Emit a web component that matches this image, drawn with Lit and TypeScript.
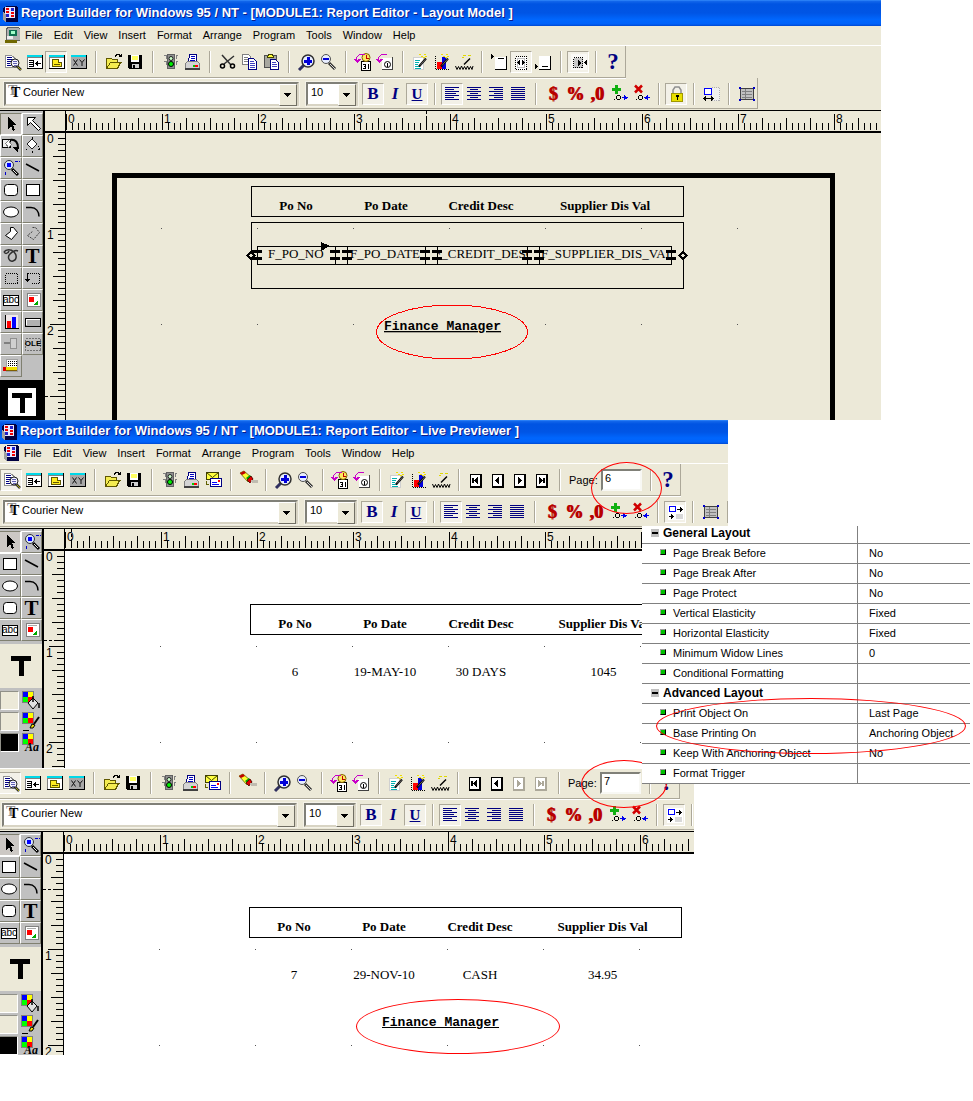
import { LitElement, html, svg, css, nothing } from "lit";
import { customElement, property } from "lit/decorators.js";

const N = "#000080";
const alignLines = (xs: number[][]) => svg`${xs.map(([x, w], i) => svg`<rect x=${x} y=${3 + i * 2} width=${w} height="1" fill=${N}/>`)}`;
const win = svg`<rect x="3" y="3" width="16" height="14" fill="#000"/><rect x="3" y="3" width="15" height="13" fill="#808080"/><rect x="4" y="6" width="14" height="10" fill="#fff"/><rect x="3" y="3" width="15" height="2" fill="#00d8e8"/>`;
const wand = svg`<g shape-rendering="auto"><path d="M9 14.500 16 6.500" stroke="#000" stroke-width="2"/><path d="M10 13.500 16 6.500" stroke="#ccc" stroke-width=".5"/></g><path d="M9 2h2m3 0h2M11 4h2m2 0h2M13 5h2" stroke="#f0e000" fill="none"/>`;
const clockArrow = svg`<path d="M4 9V5l3-2h5v-1H6L3 5v2H0l4 4 4-4H5" fill="#c800c8"/>`;
const nav = (inner: unknown) => svg`<rect x="4" y="4" width="12" height="14" fill="currentColor"/><rect x="5" y="5" width="9" height="11" fill="#fff"/>${inner}`;
const quad = svg`<rect x="1" y="0" width="12" height="12" fill="#808080"/><rect x="2" y="1" width="5" height="5" fill="#00f"/><rect x="7" y="1" width="5" height="5" fill="#ff0"/><rect x="2" y="6" width="5" height="5" fill="#0f0"/><rect x="7" y="6" width="5" height="5" fill="#f00"/>`;
const photo = svg`<rect x="4" y="3" width="13" height="13" fill="#fff" stroke="#808080"/><path d="M6 5.500h9" stroke="#aaa"/><rect x="6" y="7" width="5" height="5" fill="#f00"/><path d="M10 15l5-5v5z" fill="#0a0"/>`;
const magnifier = svg`<g shape-rendering="auto"><path d="M11 11l6 6" stroke="#000" stroke-width="3"/><path d="M12 12l4 4" stroke="#e8e8e8" stroke-width="1"/></g><circle cx="8" cy="7" r="4.500" fill="#d8e4ff" stroke="#303030"/><rect x="6" y="5" width="4" height="4" fill="#00f"/><path d="M14 3.500h5M4.500 14v4" stroke="#00c" stroke-dasharray="3 1"/>`;
const zero = svg`<rect x="5" y="15" width="1" height="1"/><path d="M8 11h3v1H8zM8 15h3v1H8zM7 12h1v3H7zM11 12h1v3h-1z" fill="#000"/>`;

const ICONS: Record<string, unknown> = {
  preview: svg`<path d="M3.500 3.500h6l5 4v8h-11z" fill="#fff" stroke="#909090"/><path d="M5 5.500h5M5 7.500h7M5 9.500h4M5 11.500h3M5 13.500h4" stroke=${N}/><g shape-rendering="auto"><path d="M15 14l4 4" stroke="#303030" stroke-width="2.500"/><path d="M15 14l4 4" stroke="#cc0" stroke-width=".8"/><circle cx="13" cy="11" r="4" fill="#f4f4ff" stroke="#202020"/></g><path d="M11 9.500h4M11 11.500h4M12 13.500h3" stroke="#6060b0"/>`,
  model: svg`${win}<path d="M5 8.500h4M5 10.500h4M5 12.500h4M5 14.500h4M9.500 8v7" stroke="#000"/><path d="M11 11.500h6" stroke="#000"/><path d="M11 11.500l3-3v6z" fill="#000"/>`,
  layout: svg`${win}<path d="M6.500 7.500h6l3 3v4h-9z" fill="#ffec20" stroke="#605800"/><path d="M12.500 7.500v3h3" fill="#fff" stroke="#605800"/><path d="M8 12.500h6" stroke="#605800"/>`,
  param: svg`<rect x="3" y="3" width="16" height="14" fill="#000"/><rect x="3" y="3" width="15" height="13" fill="#a8a8a8"/><rect x="3" y="3" width="15" height="2" fill="#00d8e8"/><path shape-rendering="auto" d="M5.500 7.500l4 6M9.500 7.500l-4 6M11.500 7.500l2.500 3 2.500-3M14 10.500v3.500" stroke="#101010" fill="none"/>`,
  open: svg`<path d="M3.500 6.500h5l1 1h5v3h3l-3 6h-11z" fill="#f4ec50" stroke="#605800"/><path d="M3.500 16.500l4-6h11" fill="none" stroke="#605800"/><path d="M12 4.500l2-2h2l2 2m.500-3v3h-3" stroke="#000" fill="none"/>`,
  save: svg`<path d="M3 3h14v14H4l-1-1z" fill="#000"/><rect x="6" y="3" width="8" height="7" fill="#fff"/><path d="M7 4h6v4H7z" fill="#ffff60"/><rect x="7" y="12" width="7" height="4" fill="#d0d0d0"/><rect x="8" y="13" width="2" height="3" fill="#000"/>`,
  light: svg`<rect x="7.500" y="2.500" width="7" height="14" fill="#909090" stroke="#606060"/><path d="M4 3.500h2v3M4 9.500h2v3M18 3.500h-2v3M18 9.500h-2v3" stroke="#808080" fill="none"/><circle cx="11" cy="6.500" r="2" fill="#c8ffc8" stroke="#202020"/><circle cx="11" cy="12" r="2.500" fill="#00f000" stroke="#000"/>`,
  print: svg`<path d="M7.500 2.500h7v7h-8z" fill="#fff" stroke="#000080"/><path d="M9 4.500h4M9 6.500h4M8 8.500h5" stroke="#0000c0"/><path d="M3.500 11.500l2-2h10l2 2v5h-14z" fill="#d4d4d4" stroke="#808080"/><rect x="3" y="16" width="15" height="2" fill="#404040"/><rect x="11" y="13" width="2" height="2" fill="#0c0"/><rect x="13" y="13" width="3" height="2" fill="#f00"/>`,
  mail: svg`<rect x="3.500" y="2.500" width="12" height="7" fill="#ffff40" stroke="#404000"/><path shape-rendering="auto" d="M3.500 2.500l6 5 6-5" fill="none" stroke="#404000"/><rect x="7.500" y="8.500" width="11" height="8" fill="#fff" stroke="#000080"/><path d="M9 12.500h5M9 14.500h7" stroke="#00f"/><rect x="15" y="10" width="2" height="2" fill="#f00"/><path d="M3.500 11v3h2" stroke="#606000" fill="none"/>`,
  cut: svg`<g shape-rendering="auto"><path d="M5 3l9 10M17 4L7 12" stroke="#303030" stroke-width="1.500"/><circle cx="5.500" cy="14" r="2" fill="none" stroke="#000" stroke-width="1.500"/><circle cx="15.500" cy="14" r="2" fill="none" stroke="#000" stroke-width="1.500"/></g>`,
  copy: svg`<path d="M3.500 2.500h6l2 2v8h-8z" fill="#fff" stroke="#808080"/><path d="M5 5.500h4M5 7.500h4M5 9.500h4" stroke="#808080"/><path d="M9.500 6.500h5l3 3v8h-8z" fill="#fff" stroke=${N}/><path d="M11 9.500h4M11 11.500h5M11 13.500h5M11 15.500h5" stroke="#4040c0"/>`,
  paste: svg`<rect x="3.500" y="3.500" width="12" height="12" fill="#a8a8a0" stroke="#505050"/><path d="M6.500 5.500l1-3h4l1 3z" fill="#ffff40" stroke="#404000"/><path d="M9.500 7.500h5l3 3v7h-8z" fill="#fff" stroke=${N}/><path d="M11 10.500h4M11 12.500h5M11 14.500h5" stroke="#4040c0"/>`,
  zoomin: svg`<path shape-rendering="auto" d="M8 13l-5 5" stroke="#303060" stroke-width="3"/><circle cx="12" cy="9" r="6" fill="#e8eeff" stroke="#303030" stroke-width="1.500"/><path d="M8 9.500h8M12 5v8" stroke="#0000d8" stroke-width="3"/>`,
  zoomout: svg`<g shape-rendering="auto"><path d="M11 11l6 6" stroke="#303030" stroke-width="3"/><path d="M12 12l5 5" stroke="#d8d8d8"/></g><circle cx="8" cy="7" r="4.500" fill="#e8eeff" stroke="#505050"/><path d="M5 7h6" stroke="#0000d8" stroke-width="2"/>`,
  calendar: svg`<rect x="8.500" y="9.500" width="9" height="9" fill="#fff" stroke="#000"/><path d="M10 12.500h3M11 14.500h2M10 16.500h3M12.500 12v5M15.500 12v5" stroke="#000" fill="none"/><circle cx="13" cy="5.500" r="4" fill="#ffe860" stroke="#806000"/><path d="M13.500 3v3h2" stroke="#c00000" fill="none"/>${clockArrow}`,
  page1: svg`<path d="M7 6h10v11H7z" fill="#fff"/><path d="M17.500 5v12.500H7" stroke="#404040" fill="none"/><circle cx="12.500" cy="12.500" r="3" fill="#fff" stroke="#000"/><path d="M12.500 11v4" stroke="#000"/>${clockArrow}`,
  wiz: svg`<rect x="3.500" y="5.500" width="10" height="12" fill="#fff" stroke="#d0d0d0"/><path d="M5 8.500h5M5 10.500h4M5 12.500h3M5 14.500h5M5 16.500h6" stroke="#00b0b0"/>${wand}`,
  chartwiz: svg`<path d="M3.500 4v13.500h14" stroke="#000" stroke-dasharray="1 1" fill="none"/><rect x="5" y="10" width="5" height="7" fill="#f00"/><rect x="10" y="5" width="4" height="12" fill="#0000e0"/>${wand}`,
  webwiz: svg`<path shape-rendering="auto" d="M10 12.500l6-6" stroke="#000" stroke-width="1.500"/><path d="M9 3.500h3m2 0h3M8 5.500h2" stroke="#e0d800"/><path shape-rendering="auto" d="M1.500 14l1.500 3.500 1.500-3 1.500 3L7.500 14l1.500 3.500 1.500-3 1.500 3 1.500-3.500 1.500 3.500 1.500-3 1.500 3 1-3.500" stroke="#000" fill="none"/>`,
  pghead: svg`<path d="M2 2l3 2.500L2 7z" fill="#000"/><rect x="6" y="5" width="11" height="12" fill="#fff"/><path d="M17.500 4v13.500H6M9 6.500h6" stroke="#000" fill="none"/>`,
  pgbody: svg`<rect x="4.500" y="4.500" width="11" height="13" fill="#fff" stroke="#000" stroke-dasharray="1 1"/><rect x="6.500" y="6.500" width="7" height="9" fill="#fff" stroke="#c0c0c0"/><path d="M9 8v5l-3-2.500zM11 8v5l3-2.500z" fill="#000"/>`,
  pgfoot: svg`<path d="M2 12l3 2.500L2 17z" fill="#000"/><rect x="6" y="4" width="11" height="13" fill="#fff"/><path d="M17.500 4v13.500H6M9 14.500h6" stroke="#000" fill="none"/>`,
  anchor: svg`<rect x="3" y="2" width="16" height="16" fill="#fff" opacity=".6"/><rect x="5.500" y="5.500" width="9" height="10" fill="#c8c8c8" stroke="#000" stroke-dasharray="1 1"/><path d="M10 8l4 3-4 3zM19 8v5l-3-2.500z" fill="#000"/>`,
  lock: svg`<path shape-rendering="auto" d="M7 9V6l2-3h4l2 3v3" fill="none" stroke="#909090" stroke-width="1.500"/><rect x="5.500" y="9.500" width="11" height="8" fill="#e8e000" stroke="#a09800"/><path d="M10 11h3v2h-1v3h-1v-3h-1z" fill="#000"/>`,
  flex: svg`<rect x="10.500" y="3.500" width="8" height="13" fill="#f0f0f0" stroke="#b0b0b0" stroke-dasharray="1 1"/><rect x="3.500" y="4.500" width="7" height="6" fill="#fff" stroke="#00f"/><path d="M4 14.500h8" stroke="#000"/><path d="M2 14.500l3-3v6zM13 14.500l-3-3v6z" fill="#000"/>`,
  flow: svg`<rect x="3" y="3" width="16" height="15" fill="#fff"/><rect x="4.500" y="4.500" width="6" height="5" fill="#fff" stroke="#00f"/><path d="M12 7.500h4M4 14.500h4" stroke="#000"/><path d="M15 5l3 2.500-3 2.500zM6 12l3 2.500L6 17z" fill="#000"/><rect x="11" y="12" width="7" height="5" fill="#d8d8d8"/>`,
  region: svg`<rect x="4.500" y="4.500" width="13" height="11" fill="#c0c0c0" stroke="#404040"/><path d="M6 7.500h10M6 10.500h10M6 13.500h10M9.500 5v10" stroke="#808080"/><path d="M3 3h2v2H3zM17 3h2v2h-2zM3 15h2v2H3zM17 15h2v2h-2z" fill="#00c"/>`,
  left: alignLines([[3, 14], [3, 9], [3, 14], [3, 11], [3, 14], [3, 9], [3, 14]]),
  center: alignLines([[3, 14], [6, 8], [3, 14], [6, 8], [3, 14], [6, 8], [3, 14]]),
  right: alignLines([[3, 14], [8, 9], [3, 14], [8, 9], [3, 14], [8, 9], [3, 14]]),
  justify: alignLines([[3, 14], [3, 14], [3, 14], [3, 14], [3, 14], [3, 14], [3, 14]]),
  erase: svg`<g shape-rendering="auto"><path d="M2 3l4-2 8 7-4 4z" fill="#ffff30" stroke="#606000" stroke-width=".8"/><path d="M2 3l4-2 2 2-4 2z" fill="#c00000"/><path d="M8 8l4-3 3 4-3 3z" fill="#00a000"/><path d="M9 10l4-4 2 3-3 4z" fill="#e00000" stroke="#400" stroke-width=".8"/></g><path d="M13 10h7v3h-6z" fill="#c0bcb0"/>`,
  first: nav(svg`<path d="M6 8h2v5H6z" fill="currentColor"/><path d="M12 7v7l-4-3.500z" fill="currentColor"/>`),
  prev: nav(svg`<path d="M11 7v7l-4-3.500z" fill="currentColor"/>`),
  next: nav(svg`<path d="M8 7v7l4-3.500z" fill="currentColor"/>`),
  last: nav(svg`<path d="M7 7v7l4-3.500z" fill="currentColor"/><path d="M11 8h2v5h-2z" fill="currentColor"/>`),
  plusdec: svg`<path d="M3 4h3V1h3v3h3v3H9v3H6V7H3z" fill="#10b010"/>${zero}<path d="M13 13h2v-2l4 2.500-4 3V14h-2z" fill="#00e"/>`,
  lessdec: svg`<path shape-rendering="auto" d="M4 1.500l7 7M11 1.500l-7 7" stroke="#d00000" stroke-width="2.500"/>${zero}<path d="M19 13h-2v-2l-4 2.500 4 3V14h2z" fill="#00e"/>`,
  select: svg`<path d="M7 3v12l3-3 2 5 2-1-2-5h4z" fill="#000"/>`,
  selectframe: svg`<path shape-rendering="auto" d="M4.500 3.500h8l-3 3 8 8-2 2-8-8-3 3z" fill="#fff" stroke="#000"/>`,
  rotate: svg`<rect x="1.500" y="3.500" width="8" height="8" fill="#f0f0f0" stroke="#000"/><path d="M4.500 7.500l3-3 3 4-3 3z" fill="#fff" stroke="#808080"/><path shape-rendering="auto" d="M9 4c6-1 8 3 8 8" fill="none" stroke="#000" stroke-width="2"/><path d="M11 11h7l-1 5z" fill="#000"/>`,
  reshape: svg`<path shape-rendering="auto" d="M9 3l5 5-5 5-5-5z" fill="#fff" stroke="#202020"/><path d="M9.500 1v2M15 10l2 2-2 3M9.500 15v2M3.500 13v1" stroke="#000" fill="none" stroke-dasharray="2 1"/>`,
  magnify: magnifier,
  line: svg`<path shape-rendering="auto" d="M3 6l13 7" stroke="#000" stroke-width="1.500"/>`,
  rrect: svg`<rect x="3.500" y="4.500" width="13" height="11" rx="3" fill="#fff" stroke="#000" shape-rendering="auto"/>`,
  rect: svg`<rect x="3.500" y="4.500" width="13" height="11" fill="#fff" stroke="#000"/>`,
  oval: svg`<ellipse cx="10" cy="10" rx="7.500" ry="5" fill="#fff" stroke="#000"/>`,
  arc: svg`<path shape-rendering="auto" d="M3 5.500h5c5 0 8 4 8 9" fill="none" stroke="#000" stroke-width="1.500"/>`,
  polygon: svg`<path shape-rendering="auto" d="M9.500 3.500h3l4 5-6 7-6-4 5-4z" fill="#fff" stroke="#000"/>`,
  polyline: svg`<path shape-rendering="auto" d="M9.500 3.500h3l4 5-6 7-6-4 5-4" fill="none" stroke="#404040" stroke-dasharray="2 1"/>`,
  freehand: svg`<path shape-rendering="auto" d="M3 6c2-3 7-3 10 0s3 8-1 9-6-4-3-7 6-4 8-3M3 6c1 2 4 2 5-1" fill="none" stroke="#303030" stroke-width="1.500"/>`,
  frame: svg`<rect x="4.500" y="5.500" width="12" height="10" fill="none" stroke="#000" stroke-dasharray="1 1"/>`,
  repeat: svg`<path d="M5 5.500h11.500v10H9" fill="none" stroke="#000" stroke-dasharray="1 1"/><path d="M4.500 5v9M2 11.500h5M3 12.500h3" fill="none" stroke="#000"/>`,
  field: svg`<rect x="2.500" y="5.500" width="15" height="10" fill="#fff" stroke="#000"/>`,
  link: photo,
  chart: svg`<rect x="4" y="3" width="13" height="13" fill="#f0e8e8"/><path d="M4.500 3v13.500h13" stroke="#000" fill="none"/><rect x="6" y="9" width="4" height="7" fill="#f00"/><rect x="11" y="5" width="4" height="11" fill="#00f"/>`,
  button: svg`<rect x="2.500" y="6.500" width="15" height="8" rx="1" fill="#b0b0b0" stroke="#000"/><path d="M3.500 13V7.500h13" stroke="#fff" fill="none"/>`,
  anchortool: svg`<path d="M3 9h6" stroke="#808080" stroke-width="2"/><path d="M9.500 4.500h6v10h-6z" fill="#d0d0d0" stroke="#909090"/>`,
  ole: svg`<rect x="2.500" y="4.500" width="15" height="12" fill="none" stroke="#707070" stroke-dasharray="2 1"/>`,
  extra: svg`<rect x="5.500" y="3.500" width="11" height="12" fill="#fff" stroke="#a0a0a0"/><path d="M7 5.500h9M7 7.500h9M7 9.500h9" stroke="#000" stroke-dasharray="1 1"/><rect x="4" y="11" width="12" height="3" fill="#f0e000"/><path d="M4 14h12v1H4z" fill="#806000"/><path d="M2 11h3v4H2z" fill="#e00000"/>`,
  fill: svg`${quad}<g shape-rendering="auto"><path d="M7 12l5-5 5 5-5 6z" fill="#e0e0e0" stroke="#000"/><path d="M12 5v6M18 12v5" stroke="#000" stroke-width="1.500"/></g>`,
  linecolor: svg`${quad}<g shape-rendering="auto"><path d="M18 5l-5 7" stroke="#000" stroke-width="2"/><path d="M9 16l2-4 3 1-2 3z" fill="#f0e000" stroke="#000"/></g><path d="M2 18.500h6" stroke="#000"/>`,
  textcolor: quad,
};

const icon = (name: string) => svg`<svg class="ic" viewBox="0 0 20 20" aria-hidden="true" shape-rendering="crispEdges">${ICONS[name]}</svg>`;

const LABELS: Record<string, string> = {
  B: "Bold", I: "Italic", U: "Underline", $: "Currency", "%": "Percent", ",0": "Commas", "?": "Help",
};

const base = css`
  :host { display: block; font: 11px/16px "Liberation Sans", Arial, sans-serif; color: #000; }
  * { box-sizing: border-box; }
  button, input, select { font: inherit; color: inherit; margin: 0; }
  .oval { position: absolute; z-index: 1; border: 1px solid #f00; border-radius: 50%; pointer-events: none; }
`;

@customElement("editor-ruler")
class EditorRuler extends LitElement {
  @property() axis = "x";
  @property({ type: Number }) mark = 0;
  @property({ type: Number }) last = 2;
  static styles = css`
    :host { display: block; overflow: hidden; }
    svg { display: block; width: 100%; height: 100%; }
    text { font: 12px "Liberation Sans", Arial, sans-serif; }
  `;
  render() {
    const nums = Array.from({ length: this.last + 1 }, (_, i) => i);
    return this.axis === "x"
      ? html`<svg shape-rendering="crispEdges">
          <defs><pattern id="t" x="21" y="0" width="96" height="20" patternUnits="userSpaceOnUse">
            ${Array.from({ length: 16 }, (_, i) => {
              const h = i === 0 ? 16 : i % 4 === 0 ? 12 : 7;
              return svg`<rect x=${i * 6} y=${19 - h} width="1" height=${h}/>`;
            })}
          </pattern></defs>
          <rect x="20" y="0" width="1" height="20"/>
          <rect x="21" y="0" width="100%" height="20" fill="url(#t)"/>
          ${nums.map((n) => svg`<text x=${23 + n * 96} y="12">${n}</text>`)}
          <line x1=${this.mark + 0.5} x2=${this.mark + 0.5} y1="0" y2="20" stroke="#000" stroke-dasharray="3 2"/>
        </svg>`
      : html`<svg shape-rendering="crispEdges">
          <defs><pattern id="t" x="0" y="-1" width="20" height="96" patternUnits="userSpaceOnUse">
            ${Array.from({ length: 16 }, (_, i) => {
              const w = i === 0 ? 15 : i % 4 === 0 ? 12 : 7;
              return svg`<rect x=${20 - w} y=${i * 6} width=${w} height="1"/>`;
            })}
          </pattern></defs>
          <rect width="20" height="100%" fill="url(#t)"/>
          ${nums.map((n) => svg`<text x="2" y=${10 + n * 96}>${n}</text>`)}
          <line x1="0" x2="20" y1=${this.mark + 0.5} y2=${this.mark + 0.5} stroke="#000" stroke-dasharray="3 2"/>
        </svg>`;
  }
}

@customElement("editor-window")
class EditorWindow extends LitElement {
  @property() heading = "";
  @property() kind = "preview";
  @property() page = "";
  @property() pressed = "";
  @property({ type: Number }) markx = 0;
  @property({ type: Number }) marky = 0;
  @property({ type: Number }) inches = 6;
  @property({ type: Boolean }) atend = false;

  static styles = [base, css`
    :host { background: #ece9d8; overflow-x: clip; }
    .title { display: flex; align-items: flex-end; gap: 3px; height: var(--title-height, 26px); padding: 0 0 3px 2px;
      background: linear-gradient(#3c94ff 0, #1468ec 1px, #0054e2 4px, #0055e5 50%, #0066fd 75%, #0062fa 92%, #0048d0 100%);
      color: #fff; font: bold 13px/20px "Liberation Sans", Arial, sans-serif; text-shadow: 1px 1px #0a1c8c; white-space: nowrap; }
    .title h1 { margin: 0; font: inherit; }
    .logo { width: 16px; height: 18px; flex: none; display: block; }
    nav { display: flex; align-items: center; height: 19px; padding: 0 0 1px 4px; }
    nav .logo { margin-right: 5px; }
    nav button { border: 0; background: none; padding: 0; margin-right: 11px; line-height: 14px; padding-bottom: 1px; }
    .bars { border-top: 1px solid #fff; }
    .bar { display: flex; align-items: center; width: max-content; border: solid #aca899; border-width: 0 1px 1px 0; white-space: nowrap; }
    .main { padding: var(--bar-top, 5px) 1px 4px; box-shadow: 0 1px #fff; }
    .format { padding: 4px 0 2px 4px; margin-bottom: 1px; }
    .tool { display: grid; place-items: center; flex: none; width: 22px; height: 22px; padding: 0; border: 1px solid transparent; background: none; }
    .tool.on { border-color: #aca899 #fff #fff #aca899; background: #f3f1e8; }
    .tool:disabled { color: #aca899; }
    .ic { width: 20px; height: 20px; display: block; grid-area: 1/1; }
    .ic circle, .ic ellipse { shape-rendering: geometricPrecision; }
    .sep { flex: none; width: 2px; height: 22px; margin: 0 5px 0 6px; background: linear-gradient(90deg, #aca899 50%, #fff 50%); }
    .letter { font: bold 17px/20px "Liberation Serif", serif; color: #000080; }
    .letter.I { font-style: italic; }
    .letter.U { font-size: 15px; text-decoration: underline; }
    .letter.red { color: #b80000; font-size: 18px; text-shadow: 1px 0 #b80000; }
    .letter.help { font-size: 23px; }
    .combo { position: relative; display: flex; height: 24px; flex: none; background: #fff; border: 2px solid; border-color: #808078 #d8d4c4 #d8d4c4 #808078; outline: 1px solid #f4f2e8; }
    .combo select { appearance: none; border: 0; background: none; width: 100%; padding: 0 20px 4px 3px; border-radius: 0; }
    .combo::after { content: ""; position: absolute; right: 0; top: 0; width: 16px; height: 20px; border: 1px solid; border-color: #fff #716f64 #716f64 #fff;
      background: linear-gradient(#000, #000) 4px 8px / 7px 1px no-repeat, linear-gradient(#000, #000) 5px 9px / 5px 1px no-repeat, linear-gradient(#000, #000) 6px 10px / 3px 1px no-repeat, linear-gradient(#000, #000) 7px 11px / 1px 1px no-repeat, #ece9d8; pointer-events: none; }
    .font { width: 295px; margin-right: 7px; }
    .size { width: 52px; margin-right: 4px; }
    .tt { position: absolute; left: 2px; top: 1px; width: 14px; height: 16px; pointer-events: none; font: bold 14px/15px "Liberation Serif", serif; color: #000; text-shadow: -3px -2px #909090; padding-left: 3px; }
    .font select { padding-left: 17px; }
    .page { position: relative; display: flex; align-items: center; width: 78px; padding-left: 3px; }
    .page label { width: 32px; line-height: 22px; }
    .page input { width: 41px; height: 22px; padding: 0 2px 4px; border: 2px solid; border-color: #808078 #f8f8f4 #f8f8f4 #808078; background: #fff; border-radius: 0; }
    .page .oval { left: 25px; top: -7px; width: 71px; height: 52px; }
    .page.end .oval { left: 16px; top: -12px; width: 86px; height: 48px; }
    .work { display: grid; grid-template-columns: 45px 21px minmax(0, 1fr); grid-template-rows: 22px minmax(0, 1fr); border-top: 1px solid #000; height: var(--work-height, 310px); }
    .box { grid-row: 1 / 3; border-right: 2px solid #000; background: #c0c0c0; padding-top: 2px; overflow: hidden; }
    .tools { display: grid; grid-template-columns: 22px 21px; }
    .tools .tool { width: auto; border: 1px solid; border-color: #fff #808070 #808070 #fff; background: #c0c0c0; }
    .tools .tool.on { border-color: #808070 #fff #fff #808070; background: #ccc8c4; }
    .tools span { font: 10px/12px "Liberation Sans", sans-serif; grid-area: 1/1; z-index: 1; }
    .tools .big { font: bold 21px/20px "Liberation Serif", serif; }
    .tools .tiny { font: bold 8px/10px "Liberation Sans", sans-serif; }
    .sample { display: grid; place-items: center; height: 44px; margin-top: 3px; background: #ece9d8; }
    .sample i { display: block; width: 20px; height: 20px; background: linear-gradient(#000, #000) 0 0 / 20px 5px no-repeat, linear-gradient(#000, #000) 8px 0 / 5px 20px no-repeat; }
    .sample.dark { height: 41px; padding-top: 3px; background: #000; }
    .sample.dark i { width: 28px; height: 28px; background: linear-gradient(#000, #000) 4px 5px / 20px 5px no-repeat, linear-gradient(#000, #000) 12px 5px / 5px 20px no-repeat, #fff; }
    .swatches { display: grid; grid-template-columns: 19px 20px; grid-auto-rows: 19px; gap: 2px; padding: 3px 1px; }
    .swatches button { position: relative; padding: 0; border: 1px solid; border-color: #909088 #fff #fff #909088; background: #ece9d8; height: 19px; }
    .swatches .ink { background: #000; }
    .swatches .pick { border: 0; background: none; }
    .swatches em { position: absolute; left: 4px; top: 8px; font: italic bold 12px/12px "Liberation Serif", serif; }
    .rx { grid-column: 2 / 4; border-bottom: 2px solid #000; }
    .ry { grid-column: 2; border-right: 1px solid #000; }
    .canvas { min-width: 0; background: var(--canvas, #fff); }
  `];

  logo = svg`<svg class="logo" viewBox="0 0 16 18" aria-hidden="true" shape-rendering="crispEdges"><path d="M1 3l4-2h9l2 2v14H5l-4-3z" fill="#000040"/><rect x="3" y="2" width="10" height="11" fill="#e8e8ff"/><rect x="4" y="3" width="3" height="2" fill="#e00"/><rect x="4" y="6" width="3" height="2" fill="#e00"/><rect x="9" y="3" width="3" height="3" fill="#22c"/><rect x="4" y="9" width="3" height="3" fill="#22c"/><rect x="9" y="7" width="3" height="2" fill="#e00"/><rect x="9" y="10" width="3" height="2" fill="#e00"/><path d="M1 7v8l3 2v-7z" fill="#a0a0a0"/></svg>`;
  seal = svg`<svg class="logo" viewBox="0 0 16 18" aria-hidden="true" shape-rendering="crispEdges"><path d="M2 3l3-2h9l2 2v11H2z" fill="#b0b0b0" stroke="#606060"/><rect x="5" y="4" width="8" height="6" fill="#107050"/><rect x="7" y="5" width="4" height="3" fill="#a0ffc8"/><path d="M3 10h6v3H3z" fill="#eee"/><rect x="1" y="14" width="12" height="3" fill="#706800"/></svg>`;

  tool(name: string) {
    const on = this.pressed.split(" ").includes(name);
    const red = name === "$" || name === "%" || name === ",0";
    const face = name in LABELS
      ? html`<span class="letter ${name === "I" || name === "U" ? name : red ? "red" : name === "?" ? "help" : ""}">${name}</span>`
      : icon(name);
    const off = this.atend && (name === "next" || name === "last");
    return html`<button class="tool ${on ? "on" : ""}" ?disabled=${off} aria-label=${LABELS[name] ?? name}>${face}</button>`;
  }
  group(spec: string) {
    return spec.split(" ").map((n) => (n === "|" ? html`<span class="sep"></span>` : n === "page" ? this.pager() : this.tool(n)));
  }
  pager() {
    return html`<div class="page ${this.atend ? "end" : ""}"><label for="pg">Page:</label><input id="pg" .value=${this.page}><span class="oval"></span></div>`;
  }
  cell(name: string) {
    const face = name === "text" ? html`<span class="big">T</span>`
      : name === "field" ? html`${icon(name)}<span>abc</span>`
      : name === "ole" ? html`${icon(name)}<span class="tiny">OLE</span>` : icon(name);
    return html`<button class="tool ${name === "select" ? "on" : ""}" aria-label=${name}>${face}</button>`;
  }
  render() {
    const model = this.kind === "model";
    return html`
      ${this.heading ? html`
        <header class="title">${this.logo}<h1>${this.heading}</h1></header>
        <nav>${model ? this.seal : this.logo}${["File", "Edit", "View", "Insert", "Format", "Arrange", "Program", "Tools", "Window", "Help"].map((m) => html`<button>${m}</button>`)}</nav>` : nothing}
      <div class="bars">
        <div class="bar main">${this.group(model
          ? "preview model layout param | open save | light print | cut copy paste | zoomin zoomout | calendar page1 | wiz chartwiz webwiz | pghead pgbody pgfoot | anchor | ?"
          : "preview model layout param | open save | light print mail | erase | zoomin zoomout | calendar page1 | wiz chartwiz webwiz | first prev next last | page | ?")}</div>
        <div class="bar format">
          <div class="combo font"><span class="tt" aria-hidden="true">T</span><select aria-label="Font"><option>Courier New</option></select></div>
          <div class="combo size"><select aria-label="Size"><option>10</option></select></div>
          ${this.group(model
            ? "B I U | left center right justify | $ % ,0 plusdec lessdec | lock | flex | region"
            : "B I U | left center right justify | $ % ,0 plusdec lessdec | flow | region |")}
        </div>
      </div>
      <div class="work">
        <div class="box">
          <div class="tools">${(model
            ? "select selectframe rotate reshape magnify line rrect rect oval arc polygon polyline freehand text frame repeat field link chart button anchortool ole extra"
            : "select magnify rect line oval arc rrect text field link").split(" ").map((n) => this.cell(n))}</div>
          <div class="sample ${model ? "dark" : ""}"><i></i></div>
          ${model ? nothing : html`<div class="swatches">
            <button aria-label="Fill"></button><button class="pick" aria-label="Fill colour">${icon("fill")}</button>
            <button aria-label="Line"></button><button class="pick" aria-label="Line colour">${icon("linecolor")}</button>
            <button class="ink" aria-label="Text"></button><button class="pick" aria-label="Text colour">${icon("textcolor")}<em>Aa</em></button>
          </div>`}
        </div>
        <editor-ruler class="rx" axis="x" .mark=${this.markx} .last=${this.inches}></editor-ruler>
        <editor-ruler class="ry" axis="y" .mark=${this.marky}></editor-ruler>
        <div class="canvas"><slot></slot></div>
      </div>`;
  }
}

const SHEET: { title: string; rows: [string, string][] }[] = [
  { title: "General Layout", rows: [["Page Break Before", "No"], ["Page Break After", "No"], ["Page Protect", "No"], ["Vertical Elasticity", "Fixed"], ["Horizontal Elasticity", "Fixed"], ["Minimum Widow Lines", "0"], ["Conditional Formatting", ""]] },
  { title: "Advanced Layout", rows: [["Print Object On", "Last Page"], ["Base Printing On", "Anchoring Object"], ["Keep With Anchoring Object", "No"], ["Format Trigger", ""]] },
];

@customElement("property-sheet")
class PropertySheet extends LitElement {
  static styles = [base, css`
    :host { background: #fff; }
    table { width: 100%; border-collapse: separate; border-spacing: 0; table-layout: fixed; }
    .val { width: 113px; }
    th, td { height: 20px; padding: 0; border-bottom: 1px solid #808080; line-height: 19px; text-align: left; font-weight: normal; white-space: nowrap; }
    td { border-left: 1px solid #808080; padding-left: 11px; }
    th { padding-left: 31px; }
    .group { padding-left: 9px; font-weight: bold; font-size: 12px; }
    .first > * { height: 18px; line-height: 15px; padding-bottom: 2px; }
    .mark { display: inline-block; width: 8px; height: 8px; margin-right: 4px; background: linear-gradient(#000, #000) 1px 3px / 6px 2px no-repeat, #c0c0c0; }
    .dot { float: left; width: 6px; height: 6px; margin: 5px 0 0 -13px; background: #00c000; border: 1px solid; border-color: #a0a0a0 #000 #000 #a0a0a0; }
    .oval { left: 14px; top: 172px; width: 310px; height: 56px; }
  `];
  render() {
    return html`<table><colgroup><col><col class="val"></colgroup>
      ${SHEET.map((g, i) => html`<tbody>
        <tr class=${i ? "" : "first"}><th class="group"><span class="mark"></span>${g.title}</th><td></td></tr>
        ${g.rows.map(([k, v]) => html`<tr><th scope="row"><span class="dot"></span>${k}</th><td>${v}</td></tr>`)}
      </tbody>`)}</table><span class="oval"></span>`;
  }
}

const dots = svg`<svg class="dots" aria-hidden="true"><defs><pattern id="d" x="95" y="95" width="96" height="96" patternUnits="userSpaceOnUse"><rect width="1" height="1" fill="#555"/></pattern></defs><rect x="10" y="10" width="100%" height="100%" fill="url(#d)"/></svg>`;

@customElement("app-root")
class AppRoot extends LitElement {
  static styles = [base, css`
    :host { position: relative; min-height: 100vh; background: #fff; overflow-x: clip; }
    .w1 { margin-right: 92px; --canvas: #ece9d8; }
    .w2 { margin: 0 245px 0 -1px; --title-height: 24px; --work-height: 240px; }
    .w3 { margin: 0 279px 0 -2px; --bar-top: 3px; --work-height: 224px; }
    .layout, .dots { display: block; width: 100%; height: 100%; }
    .layout text { font: 13px "Liberation Serif", "Times New Roman", serif; }
    .layout .head { font-weight: bold; text-anchor: middle; }
    .layout .sign { font: bold 13px "Liberation Mono", monospace; text-decoration: underline; }
    .paper { position: relative; padding: 53px 0 0 185px; font: 13px/16px "Liberation Serif", "Times New Roman", serif; height: 100%; }
    .dots { position: absolute; inset: 0; }
    .paper table { position: relative; border-collapse: separate; border-spacing: 0; table-layout: fixed; width: 433px; }
    .c1 { width: 90px; } .c3 { width: 102px; } .c4 { width: 151px; }
    thead tr { outline: 1px solid #000; outline-offset: -1px; }
    th { padding: 12px 0 3px; }
    td { padding: 29px 0 0; text-align: center; }
    th:last-child, td:last-child { padding-right: 8px; }
    .paper p { position: relative; width: max-content; margin: 32px 0 0 133px; font: bold 13px/16px "Liberation Mono", monospace; text-decoration: underline; }
    .paper .oval { left: -26px; top: -16px; width: 204px; height: 55px; }
    property-sheet { position: absolute; z-index: 2; top: 526px; right: 3px; width: 328px; }
  `];

  paper(row: string[], sign = false) {
    return html`<div class="paper">${dots}<table>
      <colgroup><col class="c1"><col class="c1"><col class="c3"><col class="c4"></colgroup>
      <thead><tr><th>Po No</th><th>Po Date</th><th>Credit Desc</th><th>Supplier Dis Val</th></tr></thead>
      <tbody><tr>${row.map((v) => html`<td>${v}</td>`)}</tr></tbody></table>
      ${sign ? html`<p>Finance Manager<span class="oval"></span></p>` : nothing}</div>`;
  }
  render() {
    const handles = [257, 335, 347, 425, 437, 527, 539, 671];
    return html`
      <editor-window class="w1" kind="model" heading="Report Builder for Windows 95 / NT - [MODULE1: Report Editor - Layout Model ]"
        pressed="layout pgbody anchor B U left lock" .markx=${381} .marky=${263} .inches=${8}>
        <svg class="layout" shape-rendering="crispEdges" role="img" aria-label="Report layout">
          <defs>
            <pattern id="g" x="95" y="95" width="96" height="96" patternUnits="userSpaceOnUse"><rect width="1" height="1" fill="#555"/></pattern>
            <clipPath id="k3"><rect x="437" y="240" width="90" height="30"/></clipPath>
            <clipPath id="k4"><rect x="539" y="240" width="133" height="30"/></clipPath>
          </defs>
          <rect x="50" y="50" width="100%" height="100%" fill="url(#g)"/>
          <g transform="translate(-66 -133)">
            <path d="M114.500 600V175.500H832.500V600" fill="none" stroke="#000" stroke-width="5"/>
            <g fill="none" stroke="#000">
              <rect x="251.500" y="186.500" width="432" height="30"/><rect x="251.500" y="222.500" width="432" height="66"/>
              <rect x="257.500" y="246.500" width="414" height="18"/>
              <path d=${handles.slice(1, -1).map((x) => `M${x + 0.5} 246V264`).join("")}/>
            </g>
            <text class="head" x="296" y="210">Po No</text><text class="head" x="386" y="210">Po Date</text>
            <text class="head" x="481" y="210">Credit Desc</text><text class="head" x="605" y="210">Supplier Dis Val</text>
            <text x="268" y="258">F_PO_NO</text><text x="350" y="258">F_PO_DATE</text>
            <g clip-path="url(#k3)"><text x="434" y="258">F_CREDIT_DESC</text></g>
            <g clip-path="url(#k4)"><text x="541" y="258">F_SUPPLIER_DIS_VAL</text></g>
            ${handles.map((x) => svg`<path d=${`M${x - 5} 250h10v3h-10zM${x - 5} 257h10v3h-10z`}/>`)}
            <path d="M321 242l9 4-9 5z"/>
            <g fill="#ece9d8" stroke="#000" stroke-width="2"><path d="M251 252l3.500 3.500-3.500 3.500-3.500-3.500z"/><path d="M683 252l3.500 3.500-3.500 3.500-3.500-3.500z"/></g>
            <text class="sign" x="384" y="330">Finance Manager</text>
            <ellipse cx="452" cy="332" rx="75.500" ry="27" fill="none" stroke="#f00"/>
          </g>
        </svg>
      </editor-window>
      <editor-window class="w2" heading="Report Builder for Windows 95 / NT - [MODULE1: Report Editor - Live Previewer ]"
        page="6" pressed="preview B U left flow" .markx=${27} .marky=${89} .inches=${5}>
        ${this.paper(["6", "19-MAY-10", "30 DAYS", "1045"])}
      </editor-window>
      <editor-window class="w3" page="7" atend pressed="preview B U left flow" .markx=${405} .marky=${35}>
        ${this.paper(["7", "29-NOV-10", "CASH", "34.95"], true)}
      </editor-window>
      <property-sheet></property-sheet>`;
  }
}
